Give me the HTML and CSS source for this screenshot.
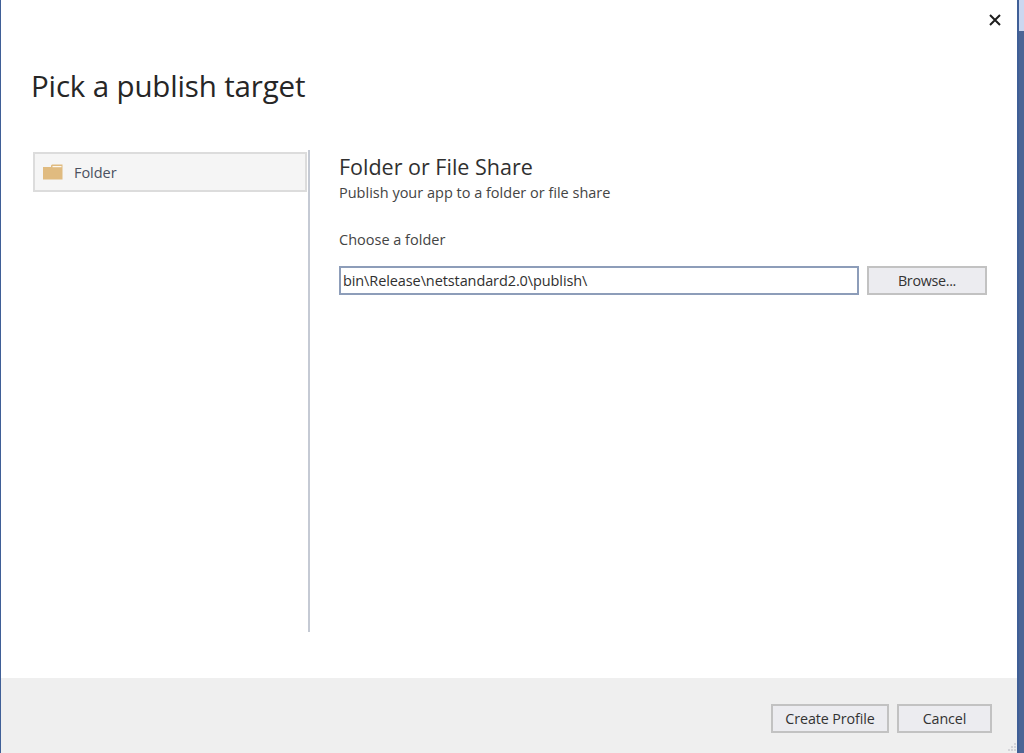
FILE: index.html
```html
<!DOCTYPE html>
<html lang="en">
<head>
<meta charset="utf-8">
<title>Pick a publish target</title>
<link rel="stylesheet" href="styles.css">
</head>
<body>
<div class="screen">
  <div class="dialog">
    <div class="topbar">
      <svg class="close" width="12" height="12" viewBox="0 0 12 12"><path d="M1 1 11 11M11 1 1 11" stroke="#1e1e1e" stroke-width="2" fill="none"/></svg>
    </div>
    <h1 class="title">Pick a publish target</h1>
    <div class="main">
      <div class="targets">
        <div class="target">
          <svg class="folder" width="20" height="16" viewBox="0 0 20 16"><path d="M0 3H8V1.500L9 0.500H19.500V15.500H0Z" fill="#e0bb80"/><rect x="9.500" y="2" width="9" height="1.200" fill="#fdf8ee"/></svg>
          <span class="target-label">Folder</span>
        </div>
      </div>
      <div class="details">
        <h2 class="heading">Folder or File Share</h2>
        <p class="sub">Publish your app to a folder or file share</p>
        <p class="choose">Choose a folder</p>
        <div class="path-row">
          <div class="path">bin\Release\netstandard2.0\publish\</div>
          <button class="btn browse">Browse...</button>
        </div>
      </div>
    </div>
    <div class="footer">
      <button class="btn create">Create Profile</button>
      <button class="btn cancel">Cancel</button>
      <svg class="grip" width="12" height="12" viewBox="0 0 12 12"><g fill="#d4d4d8"><rect x="9" y="2" width="2" height="2"/><rect x="6" y="5" width="2" height="2"/><rect x="9" y="5" width="2" height="2"/><rect x="3" y="8" width="2" height="2"/><rect x="6" y="8" width="2" height="2"/><rect x="9" y="8" width="2" height="2"/></g></svg>
    </div>
  </div>
  <div class="behind">
    <div class="behind-top"></div>
    <div class="behind-bottom"></div>
  </div>
</div>
</body>
</html>
```
FILE: styles.css
```css
* { box-sizing: border-box; }
html, body { margin: 0; padding: 0; }
body { font-family: "Open Sans", "Noto Sans", sans-serif; background: #fff; overflow: hidden; }
.screen { display: flex; width: 1024px; height: 753px; }
.dialog {
  width: 1019px; height: 753px; background: #fff;
  border-left: 1px solid #3f5f97; border-right: 2px solid #3f5f97;
  display: flex; flex-direction: column;
}
.behind { flex: 1; display: flex; flex-direction: column; }
.behind-top { height: 31px; background: #cbd7f0; }
.behind-bottom { flex: 1; background: #4b6595; }
.topbar { height: 50px; display: flex; justify-content: flex-end; padding: 14px 16px 0 0; }
.close { display: block; }
.title { margin: 0; padding-left: 30px; height: 100px; font-size: 29.500px; font-weight: 400; line-height: 72px; color: #262626; letter-spacing: -0.15px; }
.main { display: flex; height: 482px; }
.targets { width: 274px; margin-left: 32px; padding-top: 2px; }
.target {
  height: 40px; background: #f5f5f5; border: 2px solid #dcdcdc;
  display: flex; align-items: center; padding-left: 8px;
}
.folder { display: block; margin-right: 11px; }
.target-label { font-size: 14.500px; color: #4a5060; letter-spacing: -0.05px; }
.details { flex: 1; border-left: 2px solid #c5cad4; padding-left: 29px; margin-left: 1px; }
.heading { margin: 3px 0 0; font-size: 21.500px; font-weight: 400; line-height: 28px; color: #303030; }
.sub { margin: 2px 0 0; font-size: 14.500px; line-height: 20px; color: #444; }
.choose { margin: 27px 0 0; font-size: 14.500px; line-height: 20px; color: #444; }
.path-row { display: flex; margin-top: 16px; gap: 8px; }
.path {
  width: 520px; height: 29px; border: 2px solid #8d9db9; background: #fff;
  padding-left: 2px; font-size: 14.500px; line-height: 25px; color: #303030; letter-spacing: -0.1px;
}
.btn {
  font-family: inherit; font-size: 14.300px; color: #333; background: #ececf0;
  border: 2px solid #c2c2c2; padding: 0; letter-spacing: -0.1px; height: 29px;
}
.browse { width: 120px; letter-spacing: -0.3px; }
.footer {
  position: relative; margin-top: auto; height: 75px; background: #efefef;
  display: flex; justify-content: flex-end; align-items: flex-start; gap: 8px; padding: 26px 25px 0 0;
}
.create { width: 118px; }
.cancel { width: 95px; }
.grip { position: absolute; right: 0; bottom: 0; }
```
